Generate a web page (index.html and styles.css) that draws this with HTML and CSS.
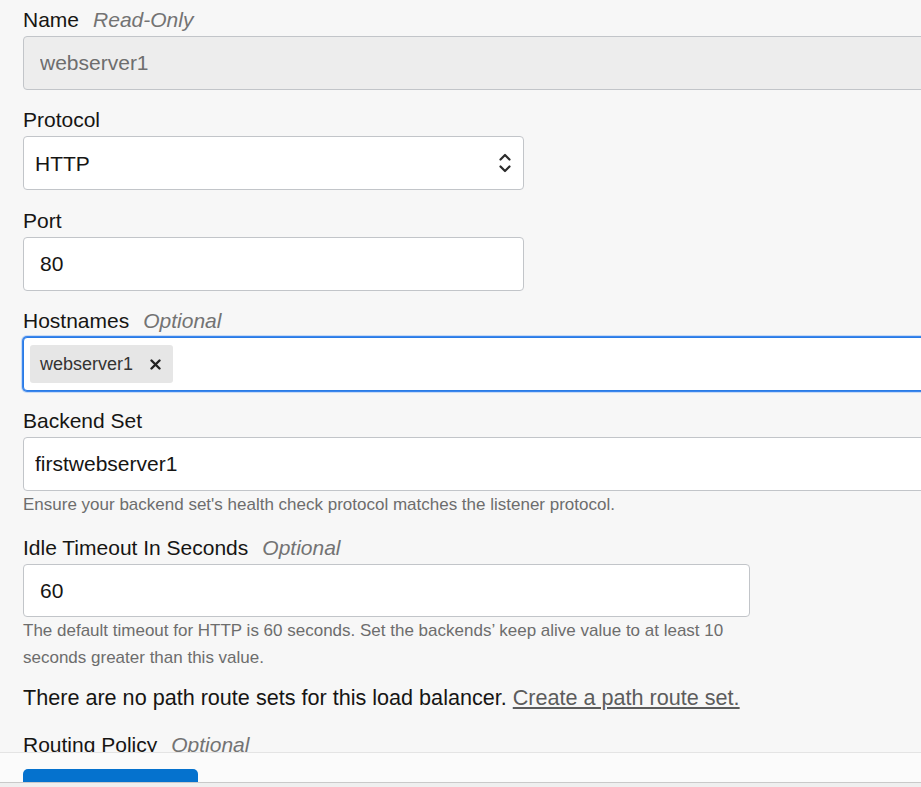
FILE: index.html
```html
<!DOCTYPE html>
<html lang="en">
<head>
<meta charset="utf-8">
<title>Edit Listener</title>
<link rel="stylesheet" href="styles.css">
</head>
<body>
<form class="page">
  <div class="field">
    <label class="label">Name<span class="hint">Read-Only</span></label>
    <input class="input input-wide input-readonly" value="webserver1" readonly>
  </div>

  <div class="field field-select">
    <label class="label">Protocol</label>
    <div class="select-wrap">
      <select class="select"><option>HTTP</option></select>
      <svg class="chevron" width="12" height="20" viewBox="0 0 12 20" aria-hidden="true">
        <path d="M1.5 6.5 L6 2 L10.5 6.5" fill="none" stroke="#2b2b2b" stroke-width="2.2" stroke-linecap="round" stroke-linejoin="round"/>
        <path d="M1.5 13.5 L6 18 L10.5 13.5" fill="none" stroke="#2b2b2b" stroke-width="2.2" stroke-linecap="round" stroke-linejoin="round"/>
      </svg>
    </div>
  </div>

  <div class="field">
    <label class="label">Port</label>
    <input class="input input-mid" value="80">
  </div>

  <div class="field">
    <label class="label">Hostnames<span class="hint">Optional</span></label>
    <div class="tags input-wide">
      <span class="chip">webserver1
        <svg class="chip-x" width="11" height="11" viewBox="0 0 11 11" aria-hidden="true">
          <path d="M1.5 1.5 L9.5 9.5 M9.5 1.5 L1.5 9.5" stroke="#222" stroke-width="2.4" stroke-linecap="round"/>
        </svg>
      </span>
      <input class="tag-input">
    </div>
  </div>

  <div class="field">
    <label class="label">Backend Set</label>
    <input class="input input-wide input-tight" value="firstwebserver1">
    <p class="help">Ensure your backend set's health check protocol matches the listener protocol.</p>
  </div>

  <div class="field field-before-note">
    <label class="label">Idle Timeout In Seconds<span class="hint">Optional</span></label>
    <input class="input input-long" value="60">
    <p class="help help-narrow">The default timeout for HTTP is 60 seconds. Set the backends’ keep alive value to at least 10 seconds greater than this value.</p>
  </div>

  <p class="note">There are no path route sets for this load balancer. <a class="link" href="#">Create a path route set.</a></p>

  <div class="field">
    <label class="label">Routing Policy<span class="hint">Optional</span></label>
  </div>
</form>

<footer class="footer">
  <div class="footer-bar">
    <button class="btn" type="button" aria-label="Save Changes"></button>
  </div>
  <div class="footer-edge"></div>
</footer>
</body>
</html>
```

FILE: styles.css
```css
* {
  box-sizing: border-box;
}

html,
body {
  margin: 0;
  padding: 0;
  overflow: hidden;
}

body {
  width: 921px;
  height: 787px;
  background: #f7f7f7;
  font-family: "Liberation Sans", Arial, sans-serif;
  color: #161513;
}

input,
select,
button {
  font-family: inherit;
}

.page {
  padding: 8px 0 0 23px;
  margin: 0;
}

.field {
  margin-bottom: 18px;
}

.field-select {
  margin-bottom: 19px;
}

.field-before-note {
  margin-bottom: 15px;
}

.label {
  display: block;
  font-size: 21px;
  line-height: 24px;
  margin-bottom: 4px;
  color: #161513;
}

.hint {
  margin-left: 14px;
  font-style: italic;
  color: #737373;
}

.input {
  display: block;
  height: 54px;
  padding: 0 16px;
  border: 1px solid #c2c5c9;
  border-radius: 4px;
  background: #ffffff;
  font-size: 21px;
  color: #161513;
  outline: none;
}

.input-wide {
  width: 1100px;
}

.input-mid {
  width: 501px;
}

.input-long {
  width: 727px;
  height: 53px;
}

.input-tight {
  padding-left: 11px;
}

.input-readonly {
  background: #ededed;
  color: #6e6e6e;
}

.select-wrap {
  position: relative;
  width: 501px;
}

.select {
  display: block;
  width: 501px;
  height: 54px;
  padding: 0 11px;
  border: 1px solid #c2c5c9;
  border-radius: 4px;
  background: #ffffff;
  font-size: 21px;
  color: #161513;
  appearance: none;
  -webkit-appearance: none;
  outline: none;
}

.chevron {
  position: absolute;
  right: 13px;
  top: 17px;
}

.tags {
  display: flex;
  align-items: center;
  height: 54px;
  padding: 0 6px;
  border: 1px solid #2a7be4;
  border-radius: 4px;
  background: #ffffff;
  box-shadow: 0 0 0 1px #3b86ee, 0 0 0 2px rgba(59, 134, 238, 0.25);
}

.chip {
  display: inline-flex;
  align-items: center;
  height: 38px;
  padding: 0 12px 0 10px;
  border-radius: 3px;
  background: #e6e6e6;
  font-size: 18px;
  color: #333333;
}

.chip-x {
  margin-left: 17px;
}

.tag-input {
  flex: 1;
  border: none;
  outline: none;
  background: transparent;
  font-size: 18px;
  height: 36px;
}

.help {
  margin: 0;
  font-size: 17px;
  line-height: 27px;
  color: #6d6d6d;
}

.help-narrow {
  width: 727px;
}

.note {
  margin: 0 0 23px;
  font-size: 21.6px;
  line-height: 24px;
  color: #161513;
}

.link {
  color: #5c5c5c;
  text-decoration: underline;
}

.footer {
  position: fixed;
  left: 0;
  right: 0;
  bottom: 0;
}

.footer-bar {
  height: 30px;
  padding: 16px 0 0 23px;
  border-top: 1px solid #e4e4e4;
  background: #fbfbfb;
  overflow: hidden;
}

.btn {
  display: block;
  width: 175px;
  height: 40px;
  padding: 0;
  border: none;
  border-radius: 5px;
  background: #0572ce;
}

.footer-edge {
  height: 5px;
  border-top: 1px solid #c9c9c9;
  background: #efefef;
}
```
